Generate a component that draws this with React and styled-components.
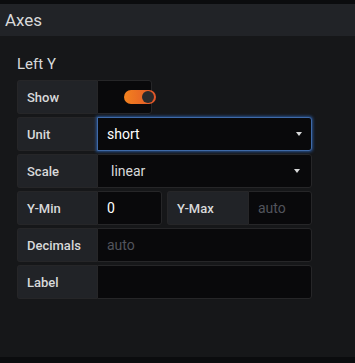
import React from "react";
import styled, { createGlobalStyle } from "styled-components";

const Global = createGlobalStyle`
  html, body { margin: 0; padding: 0; background: #161719; }
  body { font-family: Roboto, "Helvetica Neue", Arial, sans-serif; }
`;

const Page = styled.div`
  width: 355px;
  height: 363px;
  display: flex;
  flex-direction: column;
  background: #161719;
  border-top: 4px solid #0b0c0e;
  border-bottom: 6px solid #0b0c0e;
  box-sizing: border-box;
`;

const Header = styled.div`
  height: 32px;
  flex: none;
  background: #212327;
  color: #d8d9da;
  font-size: 17px;
  display: flex;
  align-items: center;
  padding-left: 5px;
`;

const Body = styled.div`
  flex: 1;
  padding: 19px 0 0 17px;
`;

const Title = styled.div`
  color: #d8d9da;
  font-size: 15px;
  line-height: 18px;
  margin-bottom: 7px;
`;

const Rows = styled.div`
  display: flex;
  flex-direction: column;
  gap: 3px;
`;

const Row = styled.div`
  display: flex;
  gap: 5px;
`;

const Field = styled.div`
  display: flex;
  height: 34px;
  box-sizing: border-box;
`;

const Label = styled.div`
  width: ${(p) => p.$w || 80}px;
  flex: none;
  background: #212327;
  border: 1px solid #262628;
  border-right: none;
  border-radius: 3px 0 0 3px;
  box-sizing: border-box;
  color: #d8d9da;
  font-size: 13px;
  font-weight: 500;
  display: flex;
  align-items: center;
  padding-left: 9px;
`;

const Input = styled.div`
  width: ${(p) => p.$w}px;
  flex: none;
  background: #09090b;
  border: 1px solid ${(p) => (p.$focus ? "#3f6aa8" : "#262628")};
  box-shadow: ${(p) => (p.$focus ? "0 0 3px 1px rgba(50,116,217,0.6)" : "none")};
  border-radius: 0 3px 3px 0;
  box-sizing: border-box;
  color: ${(p) => (p.$placeholder ? "#52545c" : p.$bright ? "#ffffff" : "#d8d9da")};
  font-size: 14px;
  display: flex;
  align-items: center;
  padding-left: ${(p) => p.$pad || 9}px;
  padding-right: 8px;
  position: relative;
`;

const Value = styled.span`
  flex: 1;
`;

const Caret = styled.span`
  width: 0;
  height: 0;
  border-left: 3.5px solid transparent;
  border-right: 3.5px solid transparent;
  border-top: 4px solid #d8d9da;
  margin-right: ${(p) => p.$mr || 0}px;
`;

const ToggleWrap = styled.div`
  display: flex;
  align-items: center;
  padding-left: 17px;
`;

const Toggle = styled.div`
  width: 32px;
  height: 14px;
  border-radius: 7px;
  background: linear-gradient(90deg, #f3821e, #e0542a);
  position: relative;
  &::after {
    content: "";
    position: absolute;
    right: 2px;
    top: 1px;
    width: 12px;
    height: 12px;
    border-radius: 50%;
    background: #2a2a2c;
  }
`;

export default function App() {
  return (
    <>
      <Global />
      <Page>
        <Header>Axes</Header>
        <Body>
          <Title>Left Y</Title>
          <Rows>
            <Row>
              <Field>
                <Label>Show</Label>
                <Input $w={55} $pad={0}>
                  <ToggleWrap>
                    <Toggle />
                  </ToggleWrap>
                </Input>
              </Field>
            </Row>
            <Row>
              <Field>
                <Label>Unit</Label>
                <Input $w={215} $focus $bright>
                  <Value>short</Value>
                  <Caret $mr={1} />
                </Input>
              </Field>
            </Row>
            <Row>
              <Field>
                <Label>Scale</Label>
                <Input $w={215} $pad={13}>
                  <Value>linear</Value>
                  <Caret $mr={3} />
                </Input>
              </Field>
            </Row>
            <Row>
              <Field>
                <Label>Y-Min</Label>
                <Input $w={65} $bright>0</Input>
              </Field>
              <Field>
                <Label $w={81}>Y-Max</Label>
                <Input $w={64} $placeholder>auto</Input>
              </Field>
            </Row>
            <Row>
              <Field>
                <Label>Decimals</Label>
                <Input $w={215} $placeholder>auto</Input>
              </Field>
            </Row>
            <Row>
              <Field>
                <Label>Label</Label>
                <Input $w={215} />
              </Field>
            </Row>
          </Rows>
        </Body>
      </Page>
    </>
  );
}
